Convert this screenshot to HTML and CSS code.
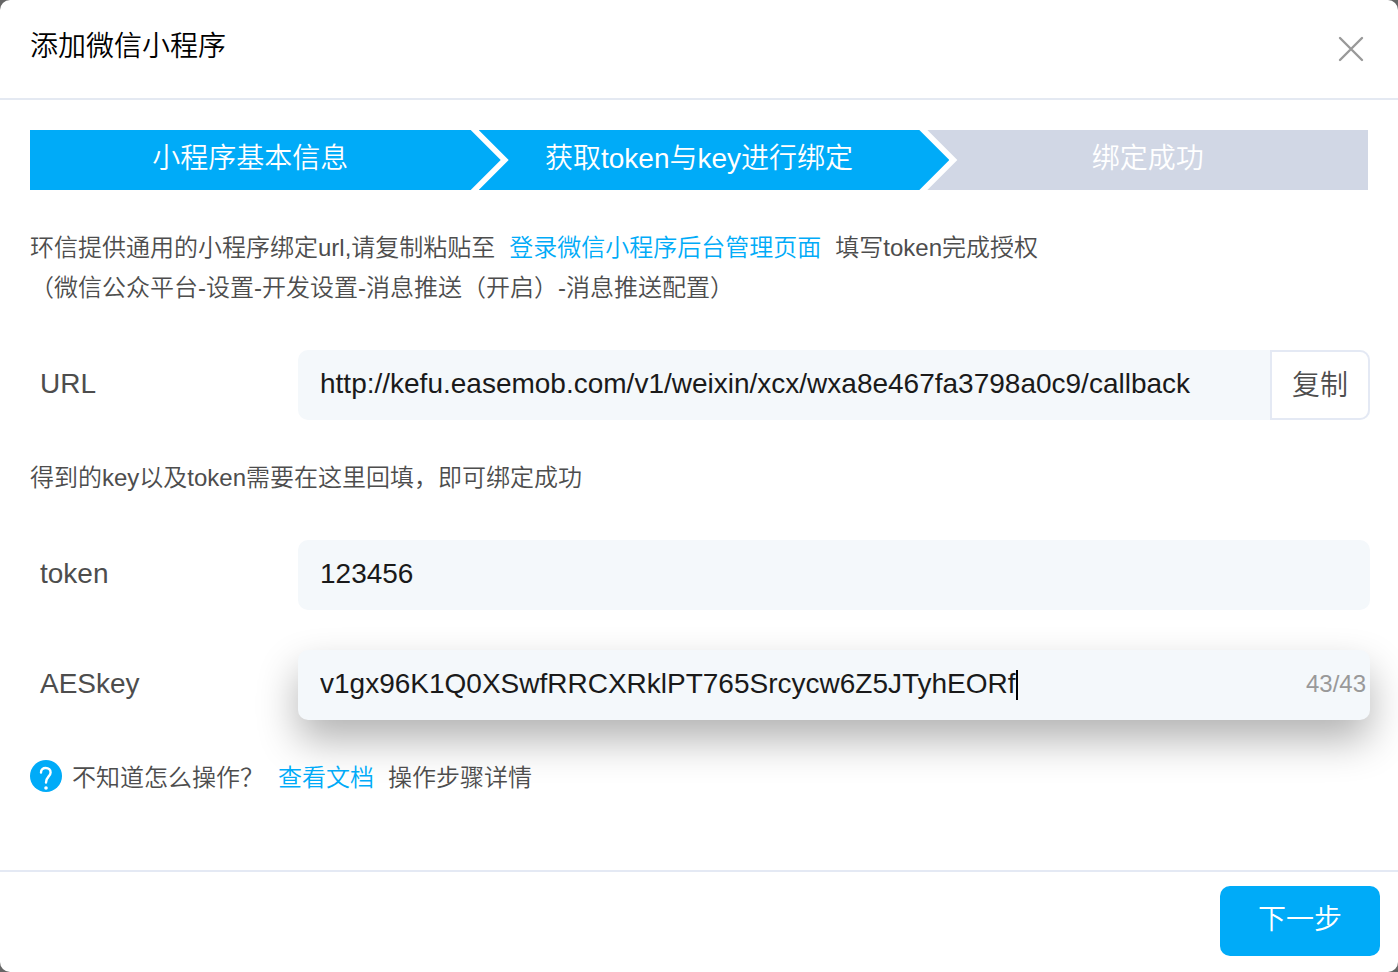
FILE: index.html
```html
<!DOCTYPE html>
<html lang="zh-CN">
<head>
    <meta charset="UTF-8">
    <meta name="viewport" content="width=device-width, initial-scale=1.0">
    <title>添加微信小程序</title>
    <link rel="stylesheet" href="styles.css">
</head>
<body>
    <div class="dialog">
        <header class="dialog-header">
            <h1>添加微信小程序</h1>
            <button type="button" class="close" aria-label="关闭">
                <svg width="26" height="26" viewBox="0 0 26 26">
                    <path d="M2 2L24 24M24 2L2 24" fill="none" stroke="#999" stroke-width="2.4" stroke-linecap="round"/>
                </svg>
            </button>
        </header>

        <form id="bind-form" class="dialog-body">
            <ol class="steps">
                <li class="step done">小程序基本信息</li>
                <li class="step done">获取token与key进行绑定</li>
                <li class="step">绑定成功</li>
            </ol>

            <p class="tip">
                环信提供通用的小程序绑定url,请复制粘贴至<a class="link" href="#">登录微信小程序后台管理页面</a>填写token完成授权<br>
                （微信公众平台-设置-开发设置-消息推送（开启）-消息推送配置）
            </p>

            <div class="field">
                <label for="url">URL</label>
                <div class="control">
                    <input type="text" id="url" value="http://kefu.easemob.com/v1/weixin/xcx/wxa8e467fa3798a0c9/callback" readonly>
                    <button type="button" class="copy">复制</button>
                </div>
            </div>

            <p class="tip">得到的key以及token需要在这里回填，即可绑定成功</p>

            <div class="field">
                <label for="token">token</label>
                <div class="control">
                    <input type="text" id="token" value="123456">
                </div>
            </div>

            <div class="field">
                <label for="aeskey">AESkey</label>
                <div class="control focused">
                    <input type="text" id="aeskey" class="typing" maxlength="43" value="v1gx96K1Q0XSwfRRCXRklPT765Srcycw6Z5JTyhEORf">
                    <span class="counter">43/43</span>
                </div>
            </div>

            <p class="help">
                <svg class="help-icon" width="32" height="32" viewBox="0 0 32 32">
                    <circle cx="16" cy="16" r="16" fill="#00abf8"/>
                    <path d="M11 12.5C11 9.5 13 8 15.7 8C18.6 8 20.6 9.8 20.6 12.4C20.6 16.2 16 16.8 16 22.5" fill="none" stroke="#fff" stroke-width="2.4" stroke-linecap="round"/>
                    <circle cx="16" cy="28" r="1.8" fill="#fff"/>
                </svg>
                <span>不知道怎么操作？<a class="link" href="#">查看文档</a>操作步骤详情</span>
            </p>
        </form>

        <footer class="dialog-footer">
            <button type="submit" form="bind-form" class="next">下一步</button>
        </footer>
    </div>
</body>
</html>
```

FILE: styles.css
```css
* {
    box-sizing: border-box;
}
body {
    margin: 0;
    background: #666;
    font-family: "Liberation Sans", "Noto Sans CJK SC", sans-serif;
    font-weight: 350;
    font-size: 28px;
    color: #4d4d4d;
}
button,
input {
    font: inherit;
    color: inherit;
}
button {
    cursor: pointer;
}
.dialog {
    display: flex;
    flex-direction: column;
    min-height: 100vh;
    background: #fff;
    border-radius: 10px;
}

/* Header */
.dialog-header {
    display: flex;
    justify-content: space-between;
    align-items: center;
    height: 100px;
    padding: 0 34px 0 30px;
    border-bottom: 2px solid #e4e9f2;
}
.dialog-header h1 {
    margin: 0;
    padding-bottom: 4px;
    font-size: 28px;
    font-weight: 350;
    line-height: 40px;
    color: #000;
}
.close {
    display: flex;
    padding: 0;
    border: none;
    background: none;
}

/* Body */
.dialog-body {
    flex: 1;
    padding: 30px 28px 40px 30px;
}
.steps {
    display: flex;
    margin: 0 2px 38px 0;
    padding: 0;
    list-style: none;
}
.step {
    flex: 1 1 0;
    height: 60px;
    line-height: 58px;
    text-align: center;
    color: #fff;
    background: #d1d7e5;
}
.step.done {
    flex-basis: 30px;
    padding-right: 30px;
    background: #00abf8;
    clip-path: polygon(0 0, calc(100% - 30px) 0, 100% 50%, calc(100% - 30px) 100%, 0 100%);
}
/* each step tucks under the arrow before it, leaving a white chevron */
.step + .step {
    margin-left: -22px;
}
.step.done + .step.done {
    clip-path: polygon(0 0, calc(100% - 30px) 0, 100% 50%, calc(100% - 30px) 100%, 0 100%, 30px 50%);
}
.step.done + .step:not(.done) {
    clip-path: polygon(0 0, 100% 0, 100% 100%, 0 100%, 30px 50%);
}
.tip {
    margin: 0;
    font-size: 24px;
    line-height: 40px;
}
.link {
    margin: 0 14px;
    color: #00abf8;
    text-decoration: none;
}
.field {
    display: flex;
    align-items: center;
    margin: 42px 0 38px;
}
.field + .field {
    margin-top: 40px;
}
.field label {
    width: 268px;
    padding: 0 0 2px 10px;
}
.control {
    display: flex;
    flex: 1;
    align-items: center;
    height: 70px;
    background: #f4f8fb;
    border-radius: 10px;
    color: #1a1a1a;
}
.control input {
    flex: 1;
    min-width: 0;
    height: 66px;
    padding: 0 0 2px 22px;
    border: none;
    outline: none;
    background: none;
}
.control.focused {
    box-shadow: 0 20px 40px rgba(0, 0, 0, 0.3);
}
.control .typing {
    flex: none;
    field-sizing: content;
    height: 30px;
    border-right: 2px solid #000;
}
.counter {
    margin-left: auto;
    padding: 0 4px 2px 0;
    font-size: 24px;
    color: #999;
}
.copy {
    width: 100px;
    height: 70px;
    padding: 0 0 4px;
    border: 2px solid #e4e9f4;
    border-radius: 0 10px 10px 0;
    background: #fff;
    color: #4d4d4d;
}
.help {
    display: flex;
    gap: 10px;
    margin: 0;
    font-size: 24px;
    line-height: 40px;
}
.help-icon {
    margin-top: 2px;
}

/* Footer */
.dialog-footer {
    display: flex;
    justify-content: flex-end;
    padding: 14px 18px 16px;
    border-top: 2px solid #e4e9f4;
}
.next {
    width: 160px;
    height: 70px;
    padding: 0 0 8px;
    border: none;
    border-radius: 10px;
    background: #00abf8;
    color: #fff;
}
```
